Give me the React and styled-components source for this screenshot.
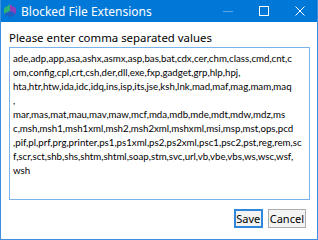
import styled, { createGlobalStyle } from 'styled-components'

const Global = createGlobalStyle`
  html, body { margin: 0; padding: 0; background: #ffffff; }
  * { box-sizing: border-box; }
`;

const lines = [
  'ade,adp,app,asa,ashx,asmx,asp,bas,bat,cdx,cer,chm,class,cmd,cnt,c',
  'om,config,cpl,crt,csh,der,dll,exe,fxp,gadget,grp,hlp,hpj,',
  'hta,htr,htw,ida,idc,idq,ins,isp,its,jse,ksh,lnk,mad,maf,mag,mam,maq',
  ',',
  'mar,mas,mat,mau,mav,maw,mcf,mda,mdb,mde,mdt,mdw,mdz,ms',
  'c,msh,msh1,msh1xml,msh2,msh2xml,mshxml,msi,msp,mst,ops,pcd',
  ',pif,pl,prf,prg,printer,ps1,ps1xml,ps2,ps2xml,psc1,psc2,pst,reg,rem,sc',
  'f,scr,sct,shb,shs,shtm,shtml,soap,stm,svc,url,vb,vbe,vbs,ws,wsc,wsf,',
  'wsh',
];

const AppIcon = () => (
  <svg width="14" height="14" viewBox="0 0 14 14">
    <polygon points="7,0.5 1,4 1,10 7,7" fill="#2bb27a" />
    <polygon points="7,0.5 13,4 13,10 7,7" fill="#8a3fb8" />
    <polygon points="1,10 7,13.5 13,10 7,7" fill="#1f5fc4" />
  </svg>
);

const App = () => {
  return (
    <>
      <Global />
      <Window>
        <TitleBar>
          <AppIcon />
          <Title>Blocked File Extensions</Title>
          <Controls>
            <CtlButton $dim>
              <svg width="10" height="10" viewBox="0 0 10 10">
                <line x1="0" y1="5.5" x2="10" y2="5.5" stroke="#ffffff" strokeWidth="1" />
              </svg>
            </CtlButton>
            <CtlButton>
              <svg width="10" height="10" viewBox="0 0 10 10">
                <rect x="0.5" y="0.5" width="9" height="9" fill="none" stroke="#ffffff" strokeWidth="1" />
              </svg>
            </CtlButton>
            <CtlButton>
              <svg width="10" height="10" viewBox="0 0 10 10">
                <path d="M0.5 0.5 L9.5 9.5 M9.5 0.5 L0.5 9.5" stroke="#ffffff" strokeWidth="1" />
              </svg>
            </CtlButton>
          </Controls>
        </TitleBar>
        <Body>
          <Label>Please enter comma separated values</Label>
          <Values readOnly value={lines.join('\n')} spellCheck={false} />
          <Footer>
            <Button $primary>Save</Button>
            <Button>Cancel</Button>
          </Footer>
        </Body>
      </Window>
    </>
  );
};

const Window = styled.div`
  width: 318px;
  height: 240px;
  display: flex;
  flex-direction: column;
  border: 1px solid #3f8fdf;
  border-top: none;
  background: #ffffff;
  font-family: "Noto Sans", "Open Sans", sans-serif;
  overflow: hidden;
`;

const TitleBar = styled.div`
  height: 22px;
  flex: none;
  display: flex;
  align-items: center;
  background: #0078d7;
  padding-left: 3px;
  margin: 0 -1px;
`;

const Title = styled.span`
  color: #ffffff;
  font-size: 12px;
  margin-left: 4px;
  flex: 1;
  white-space: nowrap;
`;

const Controls = styled.div`
  display: flex;
  height: 100%;
`;

const CtlButton = styled.div`
  width: 36px;
  height: 100%;
  display: flex;
  align-items: center;
  justify-content: center;
  opacity: ${p => (p.$dim ? 0.35 : 1)};
`;

const Body = styled.div`
  flex: 1;
  display: flex;
  flex-direction: column;
  padding: 8px 7px 0 8px;
`;

const Label = styled.div`
  font-size: 11.4px;
  line-height: 15px;
  color: #000000;
  margin-bottom: 2px;
  white-space: nowrap;
`;

const Values = styled.textarea`
  height: 153px;
  width: 100%;
  resize: none;
  border: 1px solid #7ab3ea;
  outline: none;
  padding: 3px 3px;
  font-family: "Lato", "Noto Sans", sans-serif;
  font-size: 9.7px;
  line-height: 14px;
  color: #000000;
  white-space: pre;
  overflow: hidden;
`;

const Footer = styled.div`
  display: flex;
  justify-content: flex-end;
  gap: 5px;
  margin-top: 9px;
  padding-right: 4px;
`;

const Button = styled.button`
  height: 19px;
  padding: 0 1px;
  min-width: 29px;
  background: #f3f3f3;
  border: 1px solid ${p => (p.$primary ? '#2f86db' : '#adadad')};
  box-shadow: ${p => (p.$primary ? 'inset 0 0 0 1px #2f86db' : 'none')};
  font-family: "Noto Sans", "Open Sans", sans-serif;
  font-size: 11px;
  line-height: 15px;
  color: #000000;
`;

export default App;
